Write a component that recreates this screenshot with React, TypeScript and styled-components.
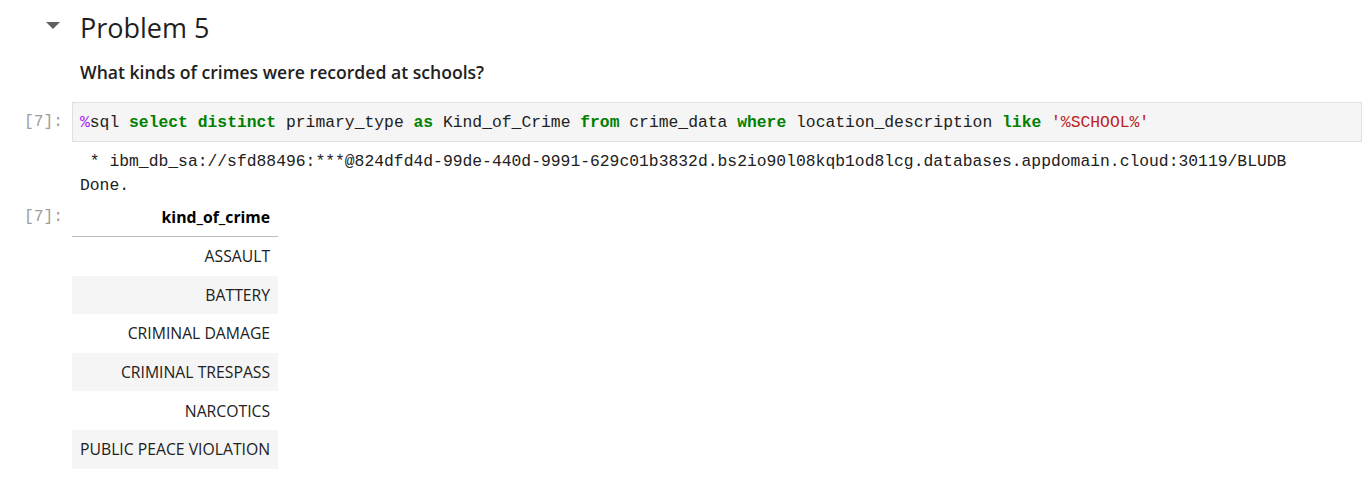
import React from 'react';
import styled, { createGlobalStyle } from 'styled-components';

const GlobalStyle = createGlobalStyle`
  html, body {
    margin: 0;
    padding: 0;
    background: #ffffff;
  }
  body {
    font-family: "Open Sans", "Noto Sans", sans-serif;
    color: #212121;
  }
`;

const Notebook = styled.div`
  display: flex;
  flex-direction: column;
  padding: 8px 8px 0 0;
`;

const Cell = styled.div<{ $gap?: number }>`
  display: flex;
  align-items: flex-start;
  margin-top: ${({ $gap }) => $gap ?? 0}px;
`;

const Gutter = styled.div`
  width: 72px;
  flex-shrink: 0;
  display: flex;
  justify-content: flex-end;
`;

const Prompt = styled.div<{ $top?: number }>`
  font-family: "Liberation Mono", "DejaVu Sans Mono", monospace;
  font-size: 16.3px;
  color: #9e9e9e;
  padding: ${({ $top }) => $top ?? 0}px 9px 0 0;
  line-height: 20px;
`;

const Collapser = styled.div`
  padding: 14px 12px 0 0;
  svg {
    display: block;
  }
`;

const Markdown = styled.div`
  flex: 1;
  padding: 0 8px;
`;

const Heading = styled.h2`
  margin: 0;
  font-size: 27px;
  font-weight: 500;
  line-height: 40px;
  color: #1f1f1f;
`;

const Question = styled.p`
  margin: 12px 0 0;
  font-size: 17.6px;
  font-weight: 600;
  line-height: 24px;
  color: #212121;
`;

const CodeBox = styled.div`
  flex: 1;
  background: #f5f5f5;
  border: 1px solid #e0e0e0;
  height: 38px;
  display: flex;
  align-items: center;
  padding: 0 7px;
`;

const Code = styled.code`
  font-family: "Liberation Mono", "DejaVu Sans Mono", monospace;
  font-size: 16.35px;
  white-space: pre;
  color: #212121;
`;

const Tok = styled.span<{ $kind: 'magic' | 'kw' | 'str' }>`
  color: ${({ $kind }) =>
    $kind === 'magic' ? '#aa22ff' : $kind === 'kw' ? '#008000' : '#ba2121'};
  font-weight: ${({ $kind }) => ($kind === 'kw' ? 700 : 400)};
`;

const Stream = styled.pre`
  flex: 1;
  margin: 0;
  padding: 8px 8px 0;
  font-family: "Liberation Mono", "DejaVu Sans Mono", monospace;
  font-size: 16.35px;
  line-height: 24px;
  color: #212121;
`;

const Table = styled.table`
  border-collapse: collapse;
  margin: 0;
  font-size: 15.75px;
  color: #212121;
`;

const Th = styled.th`
  text-align: right;
  font-weight: 700;
  padding: 0 8px;
  height: 38px;
  border-bottom: 1px solid #bdbdbd;
  color: #000;
`;

const Tr = styled.tr<{ $odd: boolean }>`
  background: ${({ $odd }) => ($odd ? '#f5f5f5' : '#ffffff')};
`;

const Td = styled.td`
  text-align: right;
  padding: 0 8px;
  height: 38.6px;
`;

const crimes = [
  'ASSAULT',
  'BATTERY',
  'CRIMINAL DAMAGE',
  'CRIMINAL TRESPASS',
  'NARCOTICS',
  'PUBLIC PEACE VIOLATION',
];

export default function App() {
  return (
    <>
      <GlobalStyle />
      <Notebook>
        <Cell>
          <Gutter>
            <Collapser>
              <svg width="14" height="8" viewBox="0 0 14 8">
                <path d="M0 0 L14 0 L7 7 Z" fill="#616161" />
              </svg>
            </Collapser>
          </Gutter>
          <Markdown>
            <Heading>Problem 5</Heading>
            <Question>What kinds of crimes were recorded at schools?</Question>
          </Markdown>
        </Cell>

        <Cell $gap={18}>
          <Gutter>
            <Prompt $top={10}>[7]:</Prompt>
          </Gutter>
          <CodeBox>
            <Code>
              <Tok $kind="magic">%</Tok>sql <Tok $kind="kw">select</Tok>{' '}
              <Tok $kind="kw">distinct</Tok> primary_type <Tok $kind="kw">as</Tok>{' '}
              Kind_of_Crime <Tok $kind="kw">from</Tok> crime_data{' '}
              <Tok $kind="kw">where</Tok> location_description{' '}
              <Tok $kind="kw">like</Tok> <Tok $kind="str">'%SCHOOL%'</Tok>
            </Code>
          </CodeBox>
        </Cell>

        <Cell>
          <Gutter />
          <Stream>
            {' * ibm_db_sa://sfd88496:***@824dfd4d-99de-440d-9991-629c01b3832d.bs2io90l08kqb1od8lcg.databases.appdomain.cloud:30119/BLUDB\nDone.'}
          </Stream>
        </Cell>

        <Cell>
          <Gutter>
            <Prompt $top={9}>[7]:</Prompt>
          </Gutter>
          <Table>
            <thead>
              <tr>
                <Th>kind_of_crime</Th>
              </tr>
            </thead>
            <tbody>
              {crimes.map((c, i) => (
                <Tr key={c} $odd={i % 2 === 1}>
                  <Td>{c}</Td>
                </Tr>
              ))}
            </tbody>
          </Table>
        </Cell>
      </Notebook>
    </>
  );
}
